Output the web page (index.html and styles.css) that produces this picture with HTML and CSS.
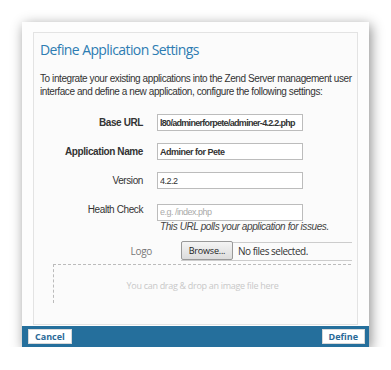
FILE: index.html
```html
<!DOCTYPE html>
<html lang="en">
<head>
    <meta charset="UTF-8">
    <meta name="viewport" content="width=device-width, initial-scale=1.0">
    <title>Define Application Settings</title>
    <link rel="stylesheet" href="styles.css">
</head>
<body>
    <div class="dialog">
        <div class="panel">
            <h1 class="title">Define Application Settings</h1>
            <p class="intro">
                To integrate your existing applications into the Zend Server management user
                interface and define a new application, configure the following settings:
            </p>

            <div class="form">
                <label class="field-label strong">Base URL</label>
                <input class="field strong url" type="text" value="l80/adminerforpete/adminer-4.2.2.php">

                <label class="field-label strong">Application Name</label>
                <input class="field strong" type="text" value="Adminer for Pete">

                <label class="field-label">Version</label>
                <input class="field" type="text" value="4.2.2">

                <label class="field-label">Health Check</label>
                <div class="field-wrap">
                    <input class="field" type="text" placeholder="e.g. /index.php">
                    <div class="hint">This URL polls your application for issues.</div>
                </div>
            </div>

            <div class="logo-row">
                <span class="logo-label">Logo</span>
                <div class="file-input">
                    <span class="browse">Browse...</span>
                    <span class="file-name">No files selected.</span>
                </div>
            </div>

            <div class="drop-zone">You can drag &amp; drop an image file here</div>
        </div>

        <div class="footer">
            <button class="footer-btn">Cancel</button>
            <button class="footer-btn">Define</button>
        </div>
    </div>
</body>
</html>
```

FILE: styles.css
```css
body {
    margin: 0;
    background: #fff;
    font-family: "Liberation Sans", Arial, sans-serif;
    color: #333;
}

.dialog {
    margin: 22px 0 0 22px;
    width: 347px;
    height: 325px;
    background: #fdfdfd;
    box-shadow: 2px 3px 12px rgba(0, 0, 0, 0.45);
    display: flex;
    flex-direction: column;
}

.panel {
    margin: 10px 11px 0 11px;
    height: 293px;
    box-sizing: border-box;
    border: 1px solid #e3e3e3;
    background: #fbfbfb;
    padding: 7px 0 0 6px;
    overflow: hidden;
}

.title {
    margin: 0;
    font-family: "Open Sans", sans-serif;
    font-weight: normal;
    font-size: 14px;
    letter-spacing: -0.6px;
    line-height: 20px;
    color: #2d7cb2;
}

.intro {
    margin: 12px 0 0 0;
    font-size: 10px;
    letter-spacing: -0.42px;
    line-height: 13px;
    color: #333;
}

.form {
    display: grid;
    grid-template-columns: 103px 146px;
    column-gap: 14px;
    row-gap: 12px;
    margin-top: 16px;
    align-items: start;
}

.field-label {
    text-align: right;
    font-size: 10px;
    letter-spacing: -0.4px;
    line-height: 17px;
    color: #333;
}

.field-label.strong {
    font-weight: bold;
}

.field {
    box-sizing: border-box;
    width: 146px;
    height: 17px;
    margin: 0;
    padding: 0 2px;
    border: 1px solid #bcbcbc;
    background: #fff;
    font-family: "Liberation Sans", Arial, sans-serif;
    font-size: 9px;
    letter-spacing: -0.5px;
    color: #333;
}

.field.strong {
    font-weight: bold;
}

.field.url {
    letter-spacing: -0.7px;
}

.field::placeholder {
    color: #aaa;
}

.hint {
    margin-left: 3px;
    white-space: nowrap;
    font-size: 10px;
    font-style: italic;
    letter-spacing: -0.4px;
    line-height: 11px;
    color: #444;
}

.logo-row {
    display: flex;
    align-items: center;
    margin-top: 10px;
}

.logo-label {
    width: 112px;
    text-align: right;
    font-family: "Open Sans", sans-serif;
    font-size: 10px;
    letter-spacing: -0.3px;
    color: #777;
}

.file-input {
    display: flex;
    align-items: center;
    margin-left: 29px;
    width: 171px;
    height: 19px;
    box-sizing: border-box;
    border-top: 1px solid #ccc;
    border-bottom: 1px solid #ccc;
}

.browse {
    box-sizing: border-box;
    height: 19px;
    width: 52px;
    margin-top: -1px;
    border: 1px solid #999;
    border-radius: 2px;
    background: linear-gradient(#f4f4f4, #dcdcdc);
    font-family: "Open Sans", sans-serif;
    font-size: 9px;
    letter-spacing: -0.2px;
    line-height: 17px;
    text-align: center;
    color: #222;
}

.file-name {
    margin-left: 5px;
    font-family: "Open Sans", sans-serif;
    font-size: 10px;
    letter-spacing: -0.5px;
    color: #333;
}

.drop-zone {
    margin: 3px 6px 0 13px;
    height: 39px;
    box-sizing: border-box;
    padding-top: 15px;
    border-top: 1px dashed #bbb;
    border-left: 1px dashed #bbb;
    font-family: "Open Sans", sans-serif;
    font-size: 9px;
    letter-spacing: -0.3px;
    line-height: 12px;
    color: #c8c8c8;
    text-align: center;
}

.footer {
    margin-top: 1px;
    height: 21px;
    background: #256f9c;
    display: flex;
    justify-content: space-between;
    align-items: center;
    padding: 0 4px 0 6px;
}

.footer-btn {
    height: 15px;
    padding: 0 6px;
    border: 1px solid #d8d8d8;
    background: #fff;
    font-family: "Open Sans", sans-serif;
    font-size: 9px;
    font-weight: bold;
    color: #2a6a98;
    line-height: 13px;
}
```
